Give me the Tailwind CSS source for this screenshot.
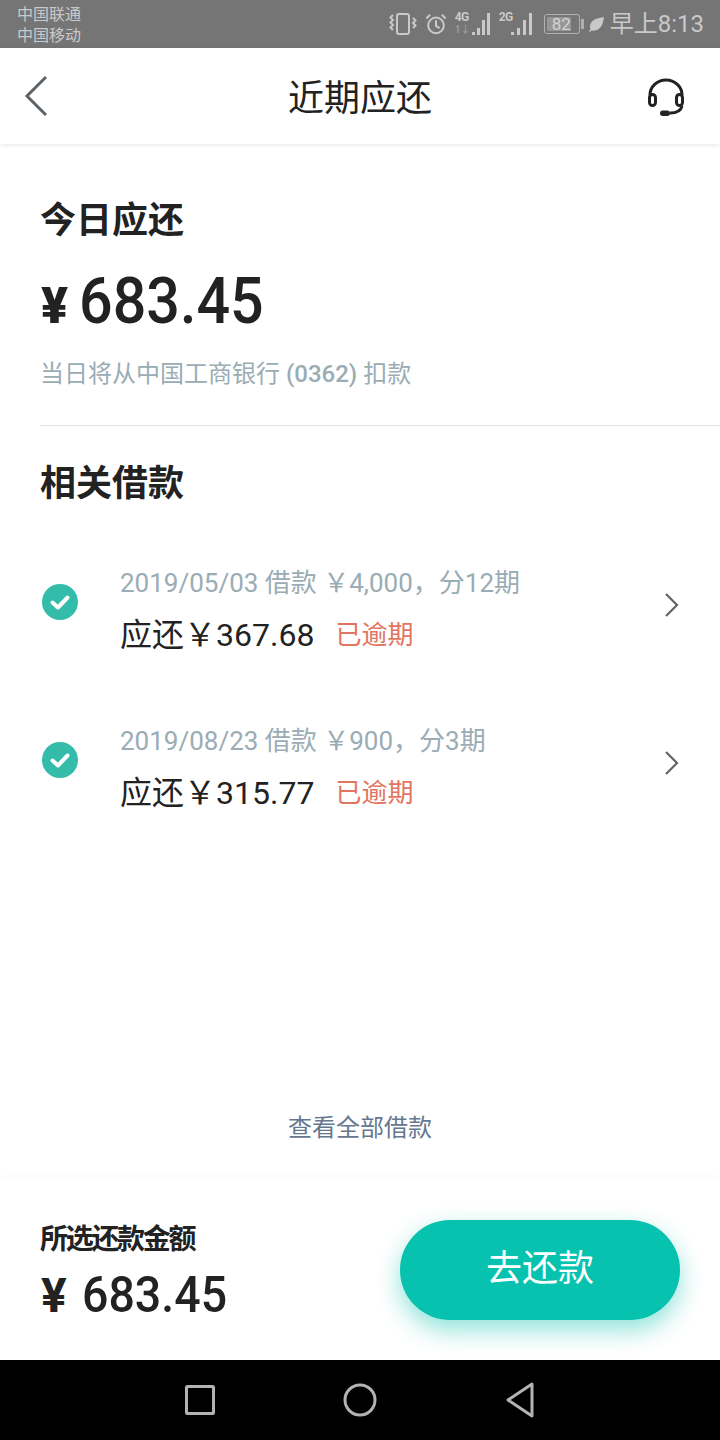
<!DOCTYPE html>
<html lang="zh-CN">
<head>
  <meta charset="UTF-8">
  <meta name="viewport" content="width=device-width, initial-scale=1.0">
  <title>近期应还</title>
  <script src="https://cdn.jsdelivr.net/npm/@tailwindcss/browser@4"></script>
</head>
<body class="bg-white font-['Roboto','Noto_Sans_CJK_SC',sans-serif]">
  <div class="w-[720px] h-[1440px] flex flex-col overflow-hidden">

    <!-- status bar -->
    <div class="h-[48px] shrink-0 bg-[#757575] text-[#c9c9c9] flex items-center pl-[17px] pr-[16px]">
      <div class="text-[16px] leading-[21px] pt-[2px]">
        <div>中国联通</div>
        <div>中国移动</div>
      </div>
      <div class="ml-auto flex items-center">
        <svg class="w-[28px] h-[24px]" viewBox="0 0 28 24" fill="none" stroke="#c9c9c9" stroke-width="2">
          <rect x="8" y="2" width="12" height="20" rx="2"/>
          <path d="M4 3L1.500 5.500 4 8 1.500 10.500 4 13l-2.500 2.500L4 18M24 6l2.500 2.500L24 11l2.500 2.500L24 16" stroke-width="2"/>
        </svg>
        <svg class="w-[22px] h-[22px] ml-[8px]" viewBox="0 0 24 24" fill="none" stroke="#c9c9c9" stroke-width="2.200">
          <circle cx="12" cy="13.500" r="8.500"/>
          <path d="M12 8v6l4 2.500M1.500 6l4-4M22.500 6l-4-4"/>
        </svg>
        <div class="relative w-[35px] h-[24px] ml-[8px]">
          <span class="absolute left-0 top-[-1px] text-[12px] leading-[12px] font-bold tracking-[-0.5px]">4G</span>
          <span class="absolute left-0 top-[13px] text-[10px] leading-[10px] font-bold text-[#9a9a9a]">1↓</span>
          <svg class="absolute right-0 top-[1px] w-[18px] h-[22px]" viewBox="0 0 18 22" fill="#c9c9c9">
            <rect x="0" y="19" width="3" height="3"/><rect x="5" y="15" width="3" height="7"/><rect x="10" y="7" width="3" height="15"/><rect x="15" y="0" width="3" height="22"/>
          </svg>
        </div>
        <div class="relative w-[34px] h-[24px] ml-[9px]">
          <span class="absolute left-0 top-[-1px] text-[12px] leading-[12px] font-bold tracking-[-0.5px]">2G</span>
          <svg class="absolute right-0 top-[1px] w-[22px] h-[22px]" viewBox="0 0 22 22" fill="#c9c9c9">
            <rect x="0" y="19" width="3" height="3"/><rect x="6" y="15" width="3" height="7"/><rect x="12" y="7" width="3" height="15"/><rect x="18" y="0" width="3" height="22"/>
          </svg>
        </div>
        <div class="flex items-center ml-[11px]">
          <div class="w-[36px] h-[20px] rounded-[3px] border border-[#b0b0b0] p-[2px]">
            <div class="w-[82%] h-full bg-[#969696] rounded-[1px] text-[17px] leading-[14px] whitespace-nowrap pl-[5px] text-[#d4d4d4]">82</div>
          </div>
          <div class="w-[3px] h-[10px] bg-[#b0b0b0] ml-[1px]"></div>
        </div>
        <svg class="w-[15px] h-[15px] ml-[5px]" viewBox="0 0 16 16" fill="#c9c9c9">
          <path d="M16 0C9 1 1.500 3 1 10c0 1 .2 2 .7 3L0 15l1 1 2-2c1 .5 2 .7 3.200.5C13 13.500 15 7 16 0z"/>
        </svg>
        <span class="text-[24px] leading-[28px] ml-[6px]">早上8:13</span>
      </div>
    </div>

    <!-- nav bar -->
    <div class="relative h-[96px] shrink-0 bg-white shadow-[0_1px_4px_rgba(0,0,0,0.1)] flex items-center justify-center">
      <svg class="absolute left-[24px] top-[27px] w-[24px] h-[42px]" viewBox="0 0 24 42" fill="none" stroke="#5f6468" stroke-width="3">
        <path d="M22 2L3 21l19 19"/>
      </svg>
      <h1 class="text-[36px] leading-[48px] text-[#222] pt-[6px] h-[54px]">近期应还</h1>
      <svg class="absolute left-[646px] top-[30px] w-[40px] h-[40px]" viewBox="0 0 40 40" fill="none" stroke="#222" stroke-width="3">
        <path d="M4 17a16 15 0 0 1 32 0"/>
        <rect x="3.500" y="16.500" width="6" height="11" rx="3"/>
        <rect x="30.500" y="16.500" width="6" height="11" rx="3"/>
        <path d="M36 28c-1 5-5 7-12 7"/>
        <rect x="14" y="32.500" width="10" height="5.500" rx="2.750" fill="#222" stroke="none"/>
      </svg>
    </div>

    <!-- today's amount -->
    <div class="pl-[40px] pt-[53px] grow">
      <h2 class="text-[36px] leading-[48px] font-bold text-[#222]">今日应还</h2>
      <div class="flex items-baseline mt-[25px] h-[64px] text-[#222] font-['Roboto','Noto_Sans',sans-serif]">
        <span class="text-[50px] leading-[64px] font-black ml-[1px]">¥</span>
        <span class="text-[64px] leading-[64px] font-medium ml-[11px] scale-x-[0.925] origin-left">683.45</span>
      </div>
      <p class="mt-[22px] text-[24px] leading-[36px] text-[#9aacb4]">当日将从中国工商银行 <span class="font-medium">(0362)</span> 扣款</p>
      <div class="h-px bg-[#e4e4e4] mt-[33px]"></div>

      <h2 class="mt-[34px] text-[36px] leading-[48px] font-bold text-[#222]">相关借款</h2>

      <div class="mt-[49px] flex flex-col gap-[62px]">
        <div class="flex items-center h-[96px] pr-[40px]">
          <svg class="w-[36px] h-[36px] ml-[2px] mb-[7px] shrink-0" viewBox="0 0 36 36">
            <circle cx="18" cy="18" r="18" fill="#34bcab"/>
            <path d="M10.500 18.500l5.500 5 9.500-10" fill="none" stroke="#fff" stroke-width="4" stroke-linecap="round" stroke-linejoin="round"/>
          </svg>
          <div class="ml-[42px] mt-[8px]">
            <p class="text-[26px] leading-[36px] text-[#9aacb4]">2019/05/03 借款 ￥4,000，分12期</p>
            <div class="flex items-center mt-[16px] h-[36px]">
              <span class="text-[32px] leading-[36px] text-[#222]">应还￥367.68</span>
              <span class="ml-[21px] text-[26px] leading-[36px] text-[#e2755f]">已逾期</span>
            </div>
          </div>
          <svg class="ml-auto w-[16px] h-[26px]" viewBox="0 0 16 26" fill="none" stroke="#5f6468" stroke-width="2.200">
            <path d="M2 2l11 11L2 24"/>
          </svg>
        </div>
        <div class="flex items-center h-[96px] pr-[40px]">
          <svg class="w-[36px] h-[36px] ml-[2px] mb-[7px] shrink-0" viewBox="0 0 36 36">
            <circle cx="18" cy="18" r="18" fill="#34bcab"/>
            <path d="M10.500 18.500l5.500 5 9.500-10" fill="none" stroke="#fff" stroke-width="4" stroke-linecap="round" stroke-linejoin="round"/>
          </svg>
          <div class="ml-[42px] mt-[8px]">
            <p class="text-[26px] leading-[36px] text-[#9aacb4]">2019/08/23 借款 ￥900，分3期</p>
            <div class="flex items-center mt-[16px] h-[36px]">
              <span class="text-[32px] leading-[36px] text-[#222]">应还￥315.77</span>
              <span class="ml-[21px] text-[26px] leading-[36px] text-[#e2755f]">已逾期</span>
            </div>
          </div>
          <svg class="ml-auto w-[16px] h-[26px]" viewBox="0 0 16 26" fill="none" stroke="#5f6468" stroke-width="2.200">
            <path d="M2 2l11 11L2 24"/>
          </svg>
        </div>
      </div>
    </div>

    <div class="h-[48px] shrink-0 text-center text-[24px] leading-[36px] text-[#66788f] mb-[22px]">查看全部借款</div>

    <!-- footer -->
    <div class="h-[180px] shrink-0 bg-white shadow-[0_-6px_12px_rgba(0,0,0,0.02)] flex items-start justify-between pl-[40px] pr-[40px] pt-[42px]">
      <div>
        <div class="text-[28px] leading-[36px] font-bold text-[#222] tracking-[-2.300px]">所选还款金额</div>
        <div class="flex items-baseline mt-[9px] h-[56px] text-[#222]">
          <span class="text-[48px] leading-[56px] font-bold ml-[1px]">¥</span>
          <span class="text-[50px] leading-[56px] font-medium ml-[15px] scale-x-[0.93] origin-left">683.45</span>
        </div>
      </div>
      <button class="w-[280px] h-[100px] -mt-[2px] pb-[2px] rounded-full bg-[#07c2ae] text-white text-[36px] shadow-[0_10px_24px_rgba(7,194,174,0.45)]">去还款</button>
    </div>

    <!-- navigation keys -->
    <div class="h-[80px] shrink-0 bg-black grid grid-cols-[160px_160px_160px] place-items-center justify-center">
      <svg class="w-[30px] h-[30px]" viewBox="0 0 30 30" fill="none" stroke="#b3b3b3" stroke-width="3"><rect x="1.500" y="1.500" width="27" height="27" rx="1"/></svg>
      <svg class="w-[34px] h-[34px]" viewBox="0 0 34 34" fill="none" stroke="#b3b3b3" stroke-width="3"><circle cx="17" cy="17" r="15"/></svg>
      <svg class="w-[30px] h-[36px]" viewBox="0 0 30 36" fill="none" stroke="#b3b3b3" stroke-width="3" stroke-linejoin="round"><path d="M27 2L3 18l24 16z"/></svg>
    </div>
  </div>
</body>
</html>
